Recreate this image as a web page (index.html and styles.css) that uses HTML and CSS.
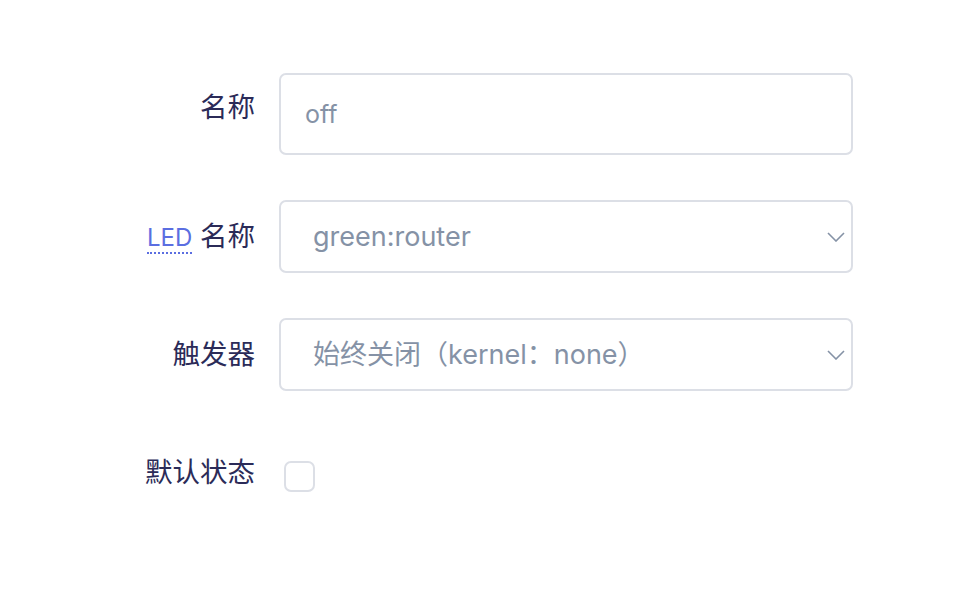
FILE: index.html
```html
<!DOCTYPE html>
<html lang="zh">
<head>
<meta charset="utf-8">
<link rel="stylesheet" href="styles.css">
</head>
<body>
<form class="form">
  <div class="row row-name">
    <label class="label" for="name">名称</label>
    <input id="name" class="control input" type="text" value="off">
  </div>
  <div class="row row-led">
    <label class="label" for="led"><abbr class="abbr" title="Light Emitting Diode">LED</abbr> 名称</label>
    <div class="select-wrap">
      <select id="led" class="control select"><option>green:router</option></select>
      <svg class="chev" width="18" height="10" viewBox="0 0 18 10"><path d="M1 1 L9 9 L17 1" fill="none" stroke="#8592a6" stroke-width="1.6"/></svg>
    </div>
  </div>
  <div class="row row-trigger">
    <label class="label" for="trigger">触发器</label>
    <div class="select-wrap">
      <select id="trigger" class="control select"><option>始终关闭（kernel：none）</option></select>
      <svg class="chev" width="18" height="10" viewBox="0 0 18 10"><path d="M1 1 L9 9 L17 1" fill="none" stroke="#8592a6" stroke-width="1.6"/></svg>
    </div>
  </div>
  <div class="row row-default">
    <label class="label" for="def">默认状态</label>
    <input id="def" class="checkbox" type="checkbox">
  </div>
</form>
</body>
</html>
```
FILE: styles.css
```css
* { box-sizing: border-box; }
html, body { margin: 0; padding: 0; background: #fff; }
body {
  font-family: Inter, "Noto Sans CJK SC", sans-serif;
  width: 972px;
  height: 598px;
  overflow: hidden;
}
.form {
  padding-top: 73px;
  display: flex;
  flex-direction: column;
}
.row {
  display: grid;
  grid-template-columns: 255px 574px;
  column-gap: 24px;
  align-items: center;
}
.row-name { height: 82px; }
.row-led { height: 73px; margin-top: 45px; }
.row-trigger { height: 73px; margin-top: 45px; }
.row-default { height: 30px; margin-top: 70px; }
.label {
  text-align: right;
  font-size: 27.5px;
  color: #2b2b58;
  line-height: 1;
}
.row-name .label { margin-top: -12px; }
.row-default .label { margin-top: -8px; }
.abbr {
  text-decoration: none;
  color: #5b6ee1;
  border-bottom: 2px dotted #5b6ee1;
  font-family: Inter, sans-serif;
  font-size: 24px;
}
.control {
  width: 574px;
  border: 2px solid #dcdfe6;
  border-radius: 7px;
  background: #fff;
  font-family: Inter, "Noto Sans CJK SC", sans-serif;
  font-size: 25px;
  color: #8592a6;
  outline: none;
  margin: 0;
}
.input {
  height: 82px;
  padding: 0 24px 0 24px;
}
.select-wrap {
  position: relative;
  width: 574px;
  height: 73px;
}
.select {
  height: 73px;
  appearance: none;
  -webkit-appearance: none;
  padding: 0 40px 0 32px;
  font-size: 27px;
}
.chev {
  position: absolute;
  right: 8px;
  top: 32px;
}
.checkbox {
  appearance: none;
  -webkit-appearance: none;
  width: 31px;
  height: 31px;
  margin: 0 0 0 5px;
  border: 2px solid #dcdfe6;
  border-radius: 7px;
  background: #fff;
  align-self: end;
}
```
